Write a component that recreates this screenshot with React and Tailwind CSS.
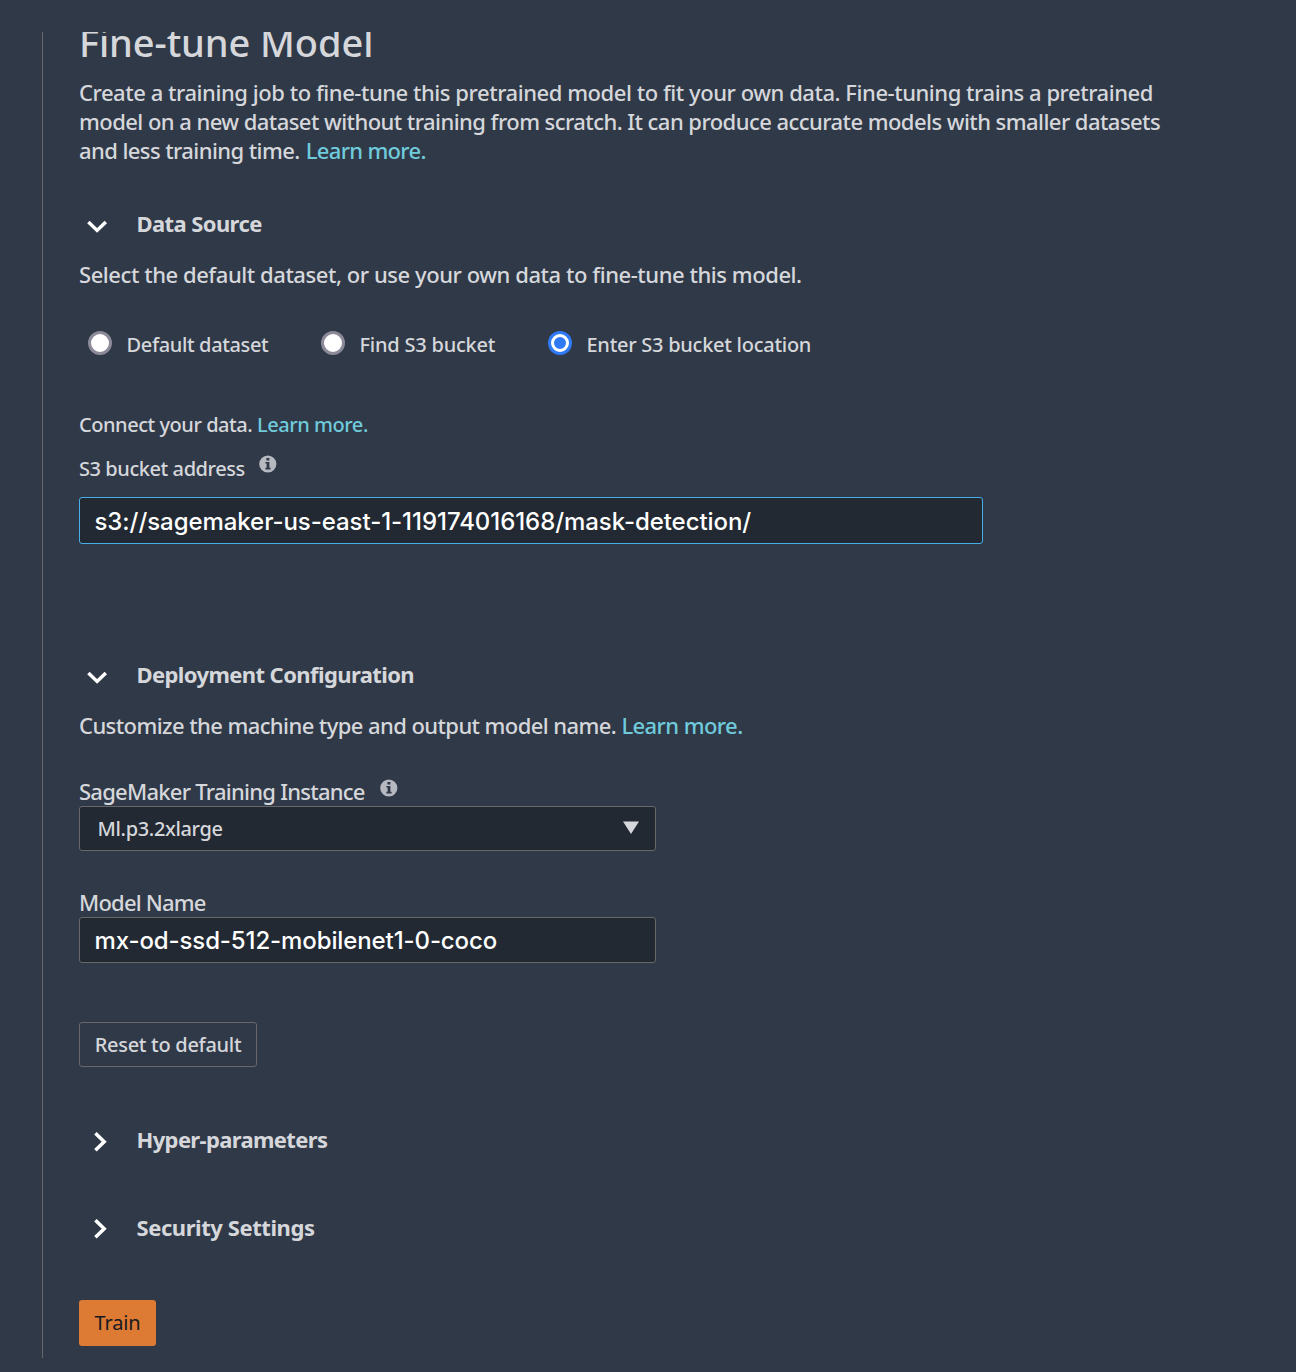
function ChevronDown() {
  return (
    <svg width="20" height="13" viewBox="0 0 20 13" fill="none" className="mt-[11px] ml-2 shrink-0">
      <path d="M1.4 1.9 10.1 10.4 18.8 1.9" stroke="#fff" strokeWidth="3.5" />
    </svg>
  );
}

function ChevronRight({ className }) {
  return (
    <svg width="14" height="20" viewBox="0 0 14 20" fill="none" className={`ml-[14px] shrink-0 ${className}`}>
      <path d="M2.4 1.2 11.2 9.7 2.4 18.2" stroke="#fff" strokeWidth="3.5" />
    </svg>
  );
}

function InfoIcon({ className }) {
  return (
    <svg width="18" height="18" viewBox="0 0 18 18" className={className}>
      <circle cx="8.8" cy="9" r="8.6" fill="#b6b9c0" />
      <path d="M7.4 2.9h3v2.6h-3zM6.4 7h4v5.8h1.2v1.6H6.4v-1.6h1.2V8.6H6.4z" fill="#303948" />
    </svg>
  );
}

function SectionHeader({ icon, children, className }) {
  return (
    <div className={`flex h-[29px] ${className}`}>
      <div className="flex w-[57.5px] shrink-0 items-start">{icon}</div>
      <h2 className="text-[22px] leading-[29px] font-bold whitespace-nowrap">{children}</h2>
    </div>
  );
}

function Radio({ checked, label, className }) {
  return (
    <label className={`flex h-6 shrink-0 items-start ${className}`}>
      {checked ? (
        <span className="flex size-6 items-center justify-center rounded-full bg-[#2f7bf6]">
          <span className="size-[18px] rounded-full border-[3px] border-white" />
        </span>
      ) : (
        <span className="size-6 rounded-full border-[3px] border-[#8c8a98] bg-white" />
      )}
      <span className="mt-0.5 ml-[14.5px] text-[20px] leading-6 whitespace-nowrap">{label}</span>
    </label>
  );
}

export default function App() {
  return (
    <div className="h-[1372px] w-[1296px] overflow-hidden bg-[#303948] pt-8 pl-[42px] font-['Noto_Sans',sans-serif] font-medium text-[#d5d7db]">
      <main className="flex h-[1326px] flex-col items-start overflow-hidden border-l border-[#68676a] pl-9">
        <h1 className="-mt-[14px] h-12 shrink-0 text-[38px] leading-[48px] tracking-[-0.1px] whitespace-nowrap">
          Fine-tune Model
        </h1>
        <p className="mt-3 text-[22px] leading-[29px] whitespace-nowrap">
          <span className="block tracking-[-0.45px]">
            Create a training job to fine-tune this pretrained model to fit your own data. Fine-tuning trains a pretrained
          </span>
          <span className="block tracking-[-0.55px]">
            model on a new dataset without training from scratch. It can produce accurate models with smaller datasets
          </span>
          <span className="block tracking-[-0.58px]">
            and less training time. <a className="ml-px tracking-[-0.68px] text-[#6fcbdb]">Learn more.</a>
          </span>
        </p>

        <SectionHeader icon={<ChevronDown />} className="mt-11 tracking-[-0.6px]">Data Source</SectionHeader>
        <p className="mt-[22px] text-[22px] leading-[29px] tracking-[-0.44px] whitespace-nowrap">
          Select the default dataset, or use your own data to fine-tune this model.
        </p>

        <div className="mt-[42px] ml-[9px] flex">
          <Radio label="Default dataset" className="w-[233px] tracking-[-0.36px]" />
          <Radio label="Find S3 bucket" className="w-[227px] tracking-[-0.22px]" />
          <Radio checked label="Enter S3 bucket location" className="tracking-[-0.27px]" />
        </div>

        <p className="mt-[58px] text-[20px] leading-6 tracking-[-0.46px] whitespace-nowrap">
          Connect your data. <a className="text-[#6fcbdb]">Learn more.</a>
        </p>
        <div className="mt-5 flex h-6 items-start text-[20px] leading-6">
          <span className="w-[180px] tracking-[-0.43px]">S3 bucket address</span>
          <InfoIcon className="-mt-0.5" />
        </div>
        <div className="mt-[16px] flex h-[47px] w-[904px] items-center rounded-[3px] border border-[#48aee6] bg-[#222933] pt-0.5 pl-[14.5px] font-['Inter',sans-serif] text-[24px] font-[450] tracking-[-0.06px] whitespace-nowrap text-white">
          s3://sagemaker-us-east-1-119174016168/mask-detection/
        </div>

        <SectionHeader icon={<ChevronDown />} className="mt-[116px] tracking-[-0.6px]">Deployment Configuration</SectionHeader>
        <p className="mt-[22px] text-[22px] leading-[29px] tracking-[-0.58px] whitespace-nowrap">
          Customize the machine type and output model name. <a className="text-[#6fcbdb]">Learn more.</a>
        </p>

        <div className="mt-[37px] flex h-[29px] items-start text-[22px] leading-[29px]">
          <span className="w-[301px] tracking-[-0.74px]">SageMaker Training Instance</span>
          <InfoIcon className="mt-[2px]" />
        </div>
        <div className="flex h-[45px] w-[577px] shrink-0 items-center justify-between rounded-[3px] border border-[#68676a] bg-[#222933] pr-4 pl-[17.5px] text-[20px] leading-6 tracking-[-0.35px]">
          <span>Ml.p3.2xlarge</span>
          <svg width="16" height="13" viewBox="0 0 16 13" className="-mt-0.5">
            <path d="M0 .4H16L8 13Z" fill="#d5d7db" />
          </svg>
        </div>

        <span className="mt-[37px] text-[22px] leading-[29px] tracking-[-0.8px]">Model Name</span>
        <div className="flex h-[46px] w-[577px] shrink-0 items-center rounded-[3px] border border-[#68676a] bg-[#222933] pt-0.5 pl-[14.5px] font-['Inter',sans-serif] text-[24px] font-[450] tracking-[-0.11px] whitespace-nowrap text-white">
          mx-od-ssd-512-mobilenet1-0-coco
        </div>

        <button className="mt-[59px] h-[45px] w-[178px] shrink-0 rounded-[3px] border border-[#68676a] text-[20px] leading-6 tracking-[-0.29px]">
          Reset to default
        </button>

        <SectionHeader icon={<ChevronRight className="mt-[7px]" />} className="mt-[58px] tracking-[-0.64px]">Hyper-parameters</SectionHeader>
        <SectionHeader icon={<ChevronRight className="mt-[6px]" />} className="mt-[59px] tracking-[-0.43px]">Security Settings</SectionHeader>

        <button className="mt-[58px] h-[46px] w-[77px] shrink-0 rounded-[3px] bg-[#dd7a33] text-[20px] leading-6 font-normal tracking-[-0.1px] text-[#16191f]">
          Train
        </button>
      </main>
    </div>
  );
}
